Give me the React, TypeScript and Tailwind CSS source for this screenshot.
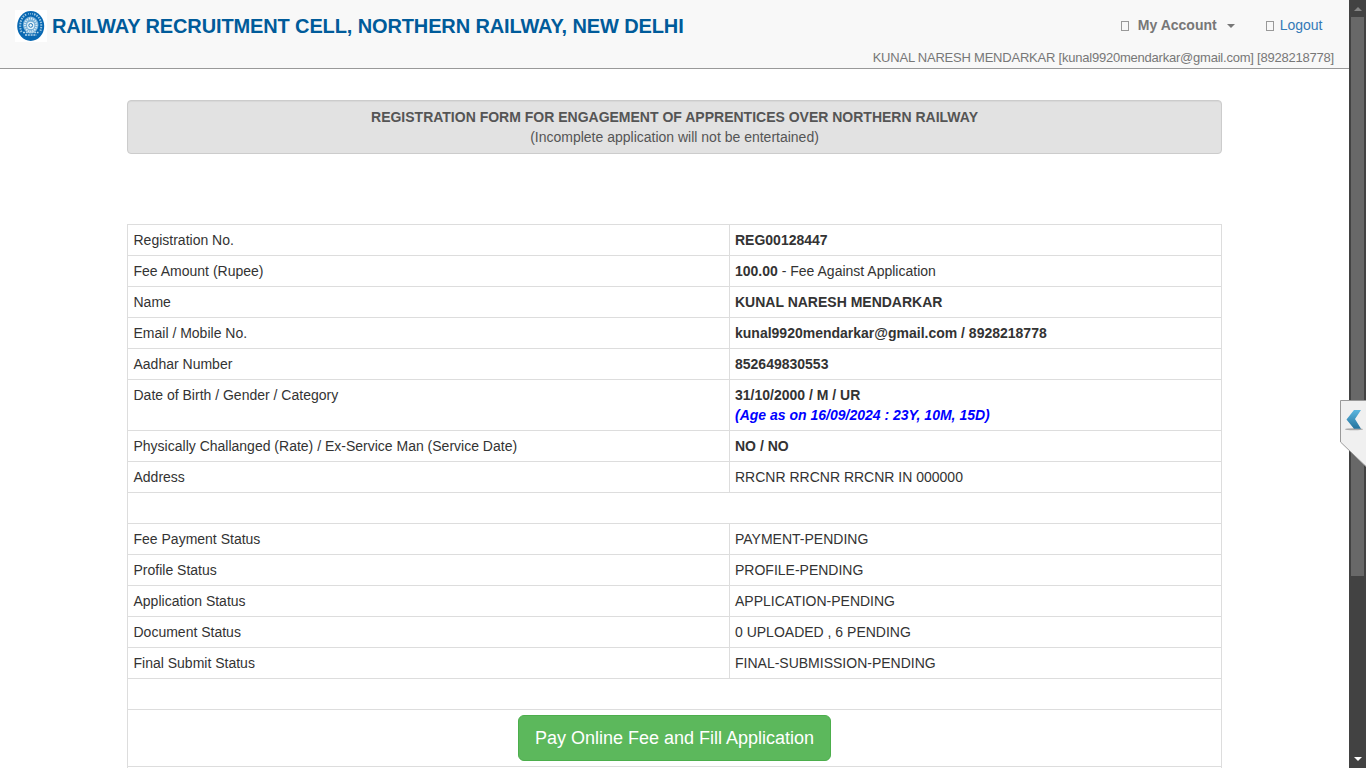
import type { ReactNode } from 'react';

type Row = { label?: string; value?: ReactNode; tall?: boolean };

const rows: Row[] = [
  { label: 'Registration No.', value: <b>REG00128447</b> },
  { label: 'Fee Amount (Rupee)', value: <><b>100.00</b> - Fee Against Application</> },
  { label: 'Name', value: <b>KUNAL NARESH MENDARKAR</b> },
  { label: 'Email / Mobile No.', value: <b>kunal9920mendarkar@gmail.com / 8928218778</b> },
  { label: 'Aadhar Number', value: <b>852649830553</b> },
  {
    label: 'Date of Birth / Gender / Category',
    value: <b>31/10/2000 / M / UR<br /><i className="text-[#0000ff]">(Age as on 16/09/2024 : 23Y, 10M, 15D)</i></b>,
    tall: true,
  },
  { label: 'Physically Challanged (Rate) / Ex-Service Man (Service Date)', value: <b>NO / NO</b> },
  { label: 'Address', value: 'RRCNR RRCNR RRCNR IN 000000' },
  {},
  { label: 'Fee Payment Status', value: 'PAYMENT-PENDING' },
  { label: 'Profile Status', value: 'PROFILE-PENDING' },
  { label: 'Application Status', value: 'APPLICATION-PENDING' },
  { label: 'Document Status', value: '0 UPLOADED , 6 PENDING' },
  { label: 'Final Submit Status', value: 'FINAL-SUBMISSION-PENDING' },
  {},
];

function Emblem() {
  return (
    <svg width="32" height="32" viewBox="0 0 32 32" className="shrink-0">
      <rect width="32" height="32" fill="#fff" />
      <ellipse cx="15.7" cy="16" rx="13.5" ry="15" fill="#0868b2" />
      <path d="M6.5 22C3.5 15 6 6 12 4.3M19 4.3C25.5 6 28 15 25 22" fill="none" stroke="#9cc6e2" strokeWidth="2" strokeDasharray="1.5 1.1" />
      <path d="M13 3.8h5" stroke="#9cc6e2" strokeWidth="1.2" strokeDasharray="1 1" />
      <ellipse cx="15.7" cy="15" rx="7.8" ry="8.6" fill="#76afd7" />
      <ellipse cx="15.7" cy="15" rx="5.8" ry="6.5" fill="none" stroke="#d8eaf5" strokeWidth="2" strokeDasharray="1.2 1" />
      <circle cx="15.7" cy="15.4" r="3.6" fill="#e6f3fa" />
      <circle cx="15.7" cy="15.4" r="1.9" fill="none" stroke="#2477b7" strokeWidth="1" />
      <path d="M8 22.5h15.5M10 25h11.5" stroke="#b5d5ea" strokeWidth="1.4" strokeDasharray="2 .8" />
    </svg>
  );
}

function MissingGlyph() {
  return <span className="h-[10px] w-2 shrink-0 translate-y-px border border-[#999]" />;
}

export default function App() {
  return (
    <div className="relative flex h-[768px] w-[1366px] overflow-hidden bg-white text-sm leading-5 text-[#333] [font-family:'Liberation_Sans',Arial,sans-serif]">
      <div className="flex w-[1349px] flex-col">
        <header className="flex h-[69px] shrink-0 justify-between border-b border-[#999] bg-[#f8f8f8]">
          <div className="flex h-[42px] items-end pl-[15px]">
            <Emblem />
            <h1 className="ml-[5px] h-8 whitespace-nowrap text-[20px] font-bold leading-8 tracking-[-0.125px] text-[#005b9a]">RAILWAY RECRUITMENT CELL, NORTHERN RAILWAY, NEW DELHI</h1>
          </div>
          <div className="flex flex-col items-end pr-[15px] pt-[15px] text-[#777]">
            <nav className="flex h-5 items-center pr-[11.5px]">
              <MissingGlyph />
              <b className="ml-[9px]">My Account</b>
              <span className="ml-[10px] translate-y-px border-x-4 border-t-4 border-x-transparent border-t-[#777]" />
              <span className="w-[31px]" />
              <MissingGlyph />
              <a className="ml-[6px] text-[#337ab7]">Logout</a>
            </nav>
            <p className="mt-[13px] whitespace-nowrap text-[13px] tracking-[-0.22px]">KUNAL NARESH MENDARKAR [kunal9920mendarkar@gmail.com] [8928218778]</p>
          </div>
        </header>

        <main className="ml-[127px] flex w-[1095px] flex-col pt-[31px]">
          <section className="mb-[70px] h-[54px] rounded border border-[#ccc] bg-[#e2e2e2] pt-[6px] text-center text-[#555] shadow-[inset_0_1px_1px_rgba(0,0,0,0.05)]">
            <b className="block">REGISTRATION FORM FOR ENGAGEMENT OF APPRENTICES OVER NORTHERN RAILWAY</b>
            <p>(Incomplete application will not be entertained)</p>
          </section>

          <div className="border-x border-t border-[#ddd]">
            {rows.map((row, i) => (
              <div key={i} className={`grid grid-cols-[602px_1fr] border-b border-[#ddd] ${row.tall ? 'h-[51px]' : 'h-[31px]'}`}>
                {row.label && (
                  <>
                    <div className="border-r border-[#ddd] py-[5px] pl-[5.5px]">{row.label}</div>
                    <div className="py-[5px] pl-[5px]">{row.value}</div>
                  </>
                )}
              </div>
            ))}
            <div className="flex h-[57px] justify-center border-b border-[#ddd] pt-[5px]">
              <button className="h-[46px] w-[313px] rounded-md border border-[#4cae4c] bg-[#5cb85c] text-[18px] text-white">Pay Online Fee and Fill Application</button>
            </div>
            <div className="h-[31px]" />
          </div>
        </main>
      </div>

      <aside className="flex w-[17px] flex-col items-center bg-[#424242]">
        <span className="mt-[7px] h-1 border-x-4 border-b-4 border-x-transparent border-b-[#858585]" />
        <div className="mt-[6px] h-[559px] w-[13px] bg-[#686868]" />
        <span className="mt-[181px] border-x-4 border-t-4 border-x-transparent border-t-white" />
      </aside>

      <svg className="absolute left-[1340px] top-[400px]" width="26" height="68" viewBox="0 0 26 68">
        <defs>
          <linearGradient id="arrow" x1="0" y1="0" x2="0" y2="1">
            <stop offset="0" stopColor="#5bb6df" />
            <stop offset="1" stopColor="#24739d" />
          </linearGradient>
        </defs>
        <path d="M.5.5H27V67.5L.5 42Z" fill="#f0f0f0" stroke="#999" />
        <ellipse cx="14" cy="29.3" rx="9" ry="1" fill="#aaa" />
        <path d="M14 10H21L15 19 21 28.8H14L6.5 19.5Z" fill="url(#arrow)" />
      </svg>
    </div>
  );
}
